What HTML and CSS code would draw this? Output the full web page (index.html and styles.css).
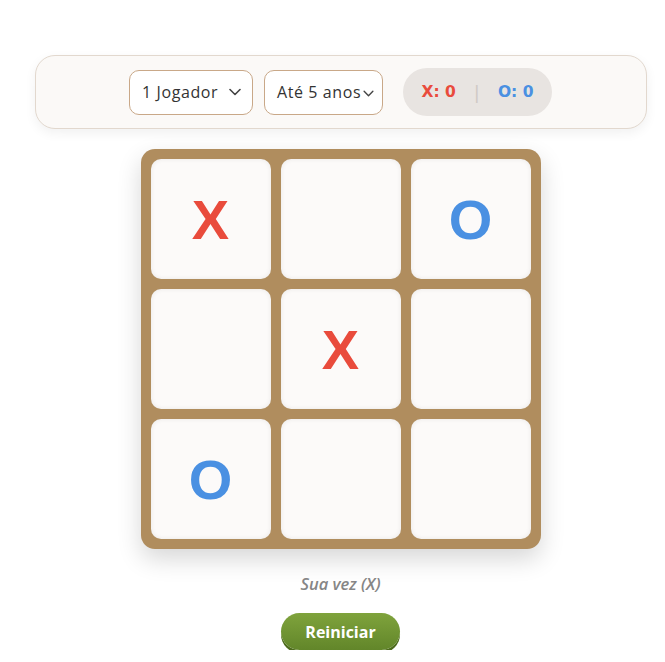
FILE: index.html
```html
<!DOCTYPE html>
<html lang="pt">
<head>
<meta charset="utf-8">
<title>Jogo da Velha</title>
<link rel="stylesheet" href="styles.css">
</head>
<body>
<div class="page">
  <div class="toolbar">
    <div class="select select-mode">
      <span class="select-label">1 Jogador</span>
      <svg class="chev" viewBox="0 0 12 8" width="12" height="8"><path d="M1 1.5 L6 6.5 L11 1.5" fill="none" stroke="#444" stroke-width="1.6" stroke-linecap="round" stroke-linejoin="round"/></svg>
    </div>
    <div class="select select-age">
      <span class="select-label">Até 5 anos</span>
      <svg class="chev chev-over" viewBox="0 0 12 8" width="11" height="7"><path d="M1 1.5 L6 6.5 L11 1.5" fill="none" stroke="#444" stroke-width="1.6" stroke-linecap="round" stroke-linejoin="round"/></svg>
    </div>
    <div class="score">
      <span class="score-x">X: 0</span>
      <span class="score-sep">|</span>
      <span class="score-o">O: 0</span>
    </div>
  </div>

  <div class="board">
    <div class="cell x">X</div>
    <div class="cell"></div>
    <div class="cell o">O</div>
    <div class="cell"></div>
    <div class="cell x">X</div>
    <div class="cell"></div>
    <div class="cell o">O</div>
    <div class="cell"></div>
    <div class="cell"></div>
  </div>

  <div class="status">Sua vez (X)</div>
  <button class="restart">Reiniciar</button>
</div>
</body>
</html>
```
FILE: styles.css
```css
html, body {
  margin: 0;
  padding: 0;
  background: #ffffff;
}
.page {
  padding: 55px 0 0 16px;
  display: flex;
  flex-direction: column;
  align-items: center;
  font-family: "Open Sans", "Liberation Sans", sans-serif;
}
.toolbar {
  box-sizing: border-box;
  width: 612px;
  height: 74px;
  background: #fbf9f7;
  border: 1px solid #e2d8ce;
  border-radius: 20px;
  box-shadow: 0 4px 12px rgba(0,0,0,0.06);
  display: flex;
  align-items: center;
  justify-content: center;
  gap: 11px;
}
.select {
  box-sizing: border-box;
  height: 45px;
  border: 1px solid #c9a888;
  border-radius: 10px;
  background: #ffffff;
  display: flex;
  align-items: center;
  color: #333;
  font-family: "Open Sans", "Liberation Sans", sans-serif;
  font-size: 16px;
  letter-spacing: 0.6px;
  position: relative;
  white-space: nowrap;
}
.select-mode {
  width: 124px;
  padding: 0 11px 0 12px;
  justify-content: space-between;
}
.select-age {
  width: 119px;
  padding-left: 12px;
}
.chev-over {
  position: absolute;
  left: 98px;
  top: 19px;
}
.score {
  margin-left: 9px;
  width: 149px;
  height: 48px;
  border-radius: 24px;
  background: #e8e4e1;
  display: flex;
  align-items: center;
  justify-content: center;
  gap: 18px;
  font-family: "DejaVu Sans", "Open Sans", sans-serif;
  font-weight: 700;
  font-size: 15.5px;
}
.score-x { color: #e94b3c; }
.score-o { color: #4a90e2; }
.score-sep { color: #cfcac6; font-weight: 400; font-size: 18px; }
.board {
  margin-top: 20px;
  box-sizing: border-box;
  width: 400px;
  height: 400px;
  padding: 10px;
  background: #b08d5e;
  border-radius: 14px;
  box-shadow: 0 10px 25px rgba(0,0,0,0.16);
  display: grid;
  grid-template-columns: repeat(3, 120px);
  grid-template-rows: repeat(3, 120px);
  gap: 10px;
}
.cell {
  background: #fcfaf9;
  border-radius: 10px;
  box-shadow: inset 0 0 5px rgba(0,0,0,0.08);
  display: flex;
  align-items: center;
  justify-content: center;
  font-family: "Liberation Sans", Arial, sans-serif;
  font-weight: 700;
  font-size: 56px;
}
.cell.x { color: #e94b3c; }
.cell.o { color: #4a90e2; }
.status {
  margin-top: 24px;
  color: #868686;
  font-style: italic;
  font-weight: 600;
  font-size: 16.5px;
  line-height: 22px;
}
.restart {
  margin-top: 18px;
  width: 119px;
  height: 37px;
  border: none;
  border-radius: 19px;
  background: linear-gradient(#7fa33c, #62862a);
  box-shadow: 0 3px 0 #4d6b1c;
  color: #ffffff;
  font-family: "Open Sans", "Liberation Sans", sans-serif;
  font-weight: 700;
  font-size: 16px;
  padding: 0;
}
```
